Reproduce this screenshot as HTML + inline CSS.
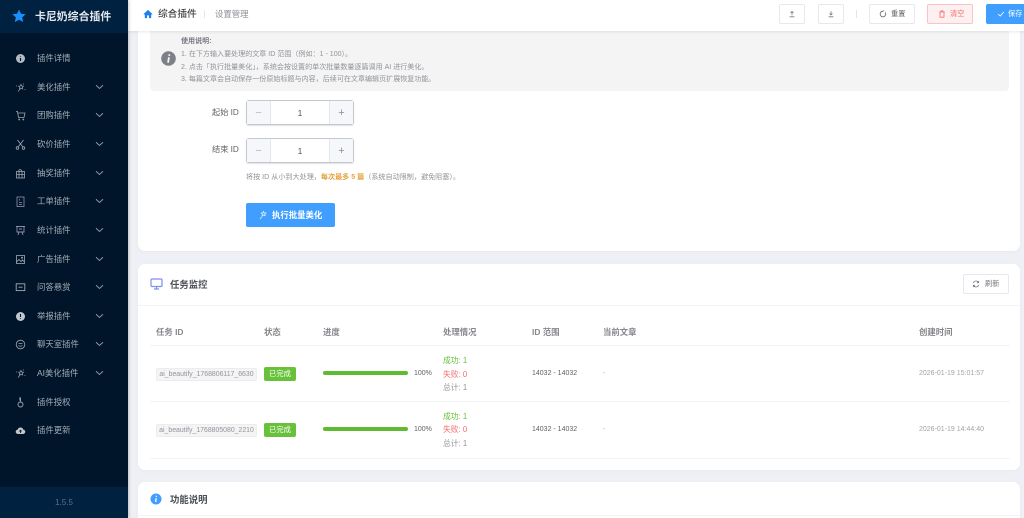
<!DOCTYPE html>
<html lang="zh">
<head>
<meta charset="utf-8">
<style>
*{box-sizing:border-box;margin:0;padding:0}
html,body{width:1024px;height:518px;overflow:hidden}
html{background:#eef0f5}
body{position:relative;background:#eef0f5;font-family:"Liberation Sans","Noto Sans CJK SC",sans-serif;color:#606266;filter:blur(.3px)}
.a{position:absolute;white-space:nowrap}
svg{position:absolute;display:block;fill:none}
#side{position:absolute;left:0;top:0;width:128px;height:518px;background:#001529;box-shadow:1px 0 3px rgba(0,0,0,.2);z-index:5}
#logo{position:absolute;left:0;top:0;width:128px;height:33px;background:#002140}
#foot{position:absolute;left:0;top:487px;width:128px;height:31px;background:#002140;color:#5f7186;font-size:8px;text-align:center;line-height:31px}
.m{position:absolute;left:37px;font-size:8.4px;line-height:12px;color:#a3adb8;white-space:nowrap}
.chev{position:absolute;left:95px;width:9px;height:6px}
.ic{left:15px;width:11px;height:11px}
#top{position:absolute;left:128px;top:0;width:896px;height:31px;background:#fff;box-shadow:0 1px 3px rgba(0,0,0,.09);z-index:4}
.btn{position:absolute;top:4px;height:20px;border:1px solid #e6e8ee;border-radius:2px;background:#fff;font-size:7.2px;line-height:18px;color:#606266}
.card{position:absolute;left:138px;width:882px;background:#fff;border-radius:7px;box-shadow:0 1px 4px rgba(0,0,0,.03)}
.num{position:absolute;left:246px;width:108px;height:25px;border:1px solid #c4c7cd;border-radius:3px;background:#fff;box-shadow:0 1px 1px rgba(0,0,0,.12);font-size:8.5px;color:#555}
.num i{position:absolute;top:0;width:24px;height:23px;background:#f5f7fa;color:#b5b8bf;font-style:normal;text-align:center;line-height:25px;font-size:11px}
.num b{position:absolute;left:24px;width:58px;top:0;text-align:center;font-weight:400;line-height:24px}
.lab{position:absolute;font-size:8.2px;color:#606266;white-space:nowrap}
.th{position:absolute;top:326px;font-size:8.4px;line-height:12px;color:#85878c;white-space:nowrap;font-weight:700}
.ln{position:absolute;left:150px;width:860px;height:1px;background:#f3f4f6}
.tid{position:absolute;left:156px;width:101px;height:13px;background:#f4f4f5;border:1px solid #ececee;border-radius:2px;font-size:6.9px;line-height:11px;color:#909399;text-align:center;white-space:nowrap;overflow:hidden}
.tag{position:absolute;left:264px;width:32px;height:14px;background:#67c23a;border-radius:2px;color:#fff;font-size:7.3px;line-height:14px;text-align:center}
.bar{position:absolute;left:323px;width:85px;height:4px;border-radius:2px;background:#5fbb32}
.s{position:absolute;font-size:7.8px;line-height:10px;white-space:nowrap}
.n{font-size:7px}
.info{font-size:7.05px;line-height:11px;color:#909399}
</style>
</head>
<body>
<div id="side">
  <div id="logo"></div>
  <svg style="left:12px;top:9px" width="14" height="14" viewBox="0 0 14 14"><path d="M7 .5l2 4.200 4.600.6-3.400 3.100 1 4.600L7 10.700l-4.200 2.300 1-4.600L.4 5.300 5 4.700z" fill="#1890ff"/></svg>
  <div class="a" style="left:35px;top:10px;font-size:10.900px;line-height:14px;color:#e4e8ec;font-weight:700">卡尼奶综合插件</div>

  <svg class="ic" style="top:53px" viewBox="0 0 11 11"><circle cx="5.500" cy="5.500" r="4.500" fill="#b4bac1"/><path d="M5.500 3v.6M5.500 5v3" stroke="#001529" stroke-width="1.200"/></svg>
  <div class="m" style="top:52px">插件详情</div>

  <svg class="ic" style="top:82px" viewBox="0 0 11 11" stroke="#8d98a4" stroke-width=".8"><path d="M3 9.500l2.500-3M6 2.500l.8 1.500 1.700.2-1.200 1.200.3 1.600-1.600-.8-1.500.8.300-1.600L3.600 4.200l1.600-.2zM1 4h1M9.500 7.500h1M8.500 1.500v1"/></svg>
  <div class="m" style="top:81px">美化插件</div>
  <svg class="chev" style="top:84px" viewBox="0 0 9 6"><path d="M1 1.200l3.500 3.300L8 1.200" stroke="#8b96a3"/></svg>

  <svg class="ic" style="top:110px" viewBox="0 0 11 11" stroke="#a0a9b3" stroke-width=".8"><path d="M1 1.500h1.500l1 6h5.500L10 3H3"/><circle cx="4.200" cy="9.500" r=".5"/><circle cx="8.300" cy="9.500" r=".5"/></svg>
  <div class="m" style="top:109px">团购插件</div>
  <svg class="chev" style="top:112px" viewBox="0 0 9 6"><path d="M1 1.200l3.500 3.300L8 1.200" stroke="#8b96a3"/></svg>

  <svg class="ic" style="top:139px" viewBox="0 0 11 11" stroke="#a0a9b3" stroke-width=".8"><path d="M2.500 1l5 6.500M8.500 1l-5 6.500"/><circle cx="2.500" cy="9" r="1.300"/><circle cx="8.500" cy="9" r="1.300"/></svg>
  <div class="m" style="top:138px">砍价插件</div>
  <svg class="chev" style="top:141px" viewBox="0 0 9 6"><path d="M1 1.200l3.500 3.300L8 1.200" stroke="#8b96a3"/></svg>

  <svg class="ic" style="top:168px" viewBox="0 0 11 11" stroke="#a0a9b3" stroke-width=".8"><rect x="1.500" y="3.500" width="8" height="6.500"/><path d="M1.500 6.500h8M4 3.500v6.500M7 3.500v6.500M4 3.500c-1-2 2-3 3 0"/></svg>
  <div class="m" style="top:167px">抽奖插件</div>
  <svg class="chev" style="top:170px" viewBox="0 0 9 6"><path d="M1 1.200l3.500 3.300L8 1.200" stroke="#8b96a3"/></svg>

  <svg class="ic" style="top:196px" viewBox="0 0 11 11" stroke="#8f8fb0" stroke-width=".8"><rect x="2" y="1" width="7" height="9.500"/><path d="M4 6.500h3M4 8.500h3M4.500 3v1.500"/></svg>
  <div class="m" style="top:195px">工单插件</div>
  <svg class="chev" style="top:198px" viewBox="0 0 9 6"><path d="M1 1.200l3.500 3.300L8 1.200" stroke="#8b96a3"/></svg>

  <svg class="ic" style="top:225px" viewBox="0 0 11 11" stroke="#8f8fb0" stroke-width=".9"><path d="M1 1.500h9M2 1.500v5.500h7V1.500M4 7l-1 3M7 7l1 3M4 4h3"/></svg>
  <div class="m" style="top:224px">统计插件</div>
  <svg class="chev" style="top:227px" viewBox="0 0 9 6"><path d="M1 1.200l3.500 3.300L8 1.200" stroke="#8b96a3"/></svg>

  <svg class="ic" style="top:254px" viewBox="0 0 11 11" stroke="#a0a9b3" stroke-width=".8"><rect x="1.500" y="1.500" width="8" height="8"/><path d="M1.500 8l2.500-2.500 2 2 1.500-1.500 2 2"/><circle cx="7" cy="3.800" r=".6"/></svg>
  <div class="m" style="top:253px">广告插件</div>
  <svg class="chev" style="top:256px" viewBox="0 0 9 6"><path d="M1 1.200l3.500 3.300L8 1.200" stroke="#8b96a3"/></svg>

  <svg class="ic" style="top:282px" viewBox="0 0 11 11" stroke="#a0a9b3" stroke-width=".9"><rect x="1.200" y="1.800" width="8.600" height="6.800"/><path d="M3.500 5.200h4"/></svg>
  <div class="m" style="top:281px">问答悬赏</div>
  <svg class="chev" style="top:284px" viewBox="0 0 9 6"><path d="M1 1.200l3.500 3.300L8 1.200" stroke="#8b96a3"/></svg>

  <svg class="ic" style="top:311px" viewBox="0 0 11 11"><circle cx="5.500" cy="5.500" r="4.500" fill="#c2c7cd"/><path d="M5.500 3v3M5.500 7.200v.8" stroke="#001529" stroke-width="1.100"/></svg>
  <div class="m" style="top:310px">举报插件</div>
  <svg class="chev" style="top:313px" viewBox="0 0 9 6"><path d="M1 1.200l3.500 3.300L8 1.200" stroke="#8b96a3"/></svg>

  <svg class="ic" style="top:339px" viewBox="0 0 11 11" stroke="#a0a9b3" stroke-width=".8"><circle cx="5.500" cy="5.500" r="4.300"/><path d="M3.500 6.500c1 1 3 1 4 0M3.500 4.500h4"/></svg>
  <div class="m" style="top:338px">聊天室插件</div>
  <svg class="chev" style="top:341px" viewBox="0 0 9 6"><path d="M1 1.200l3.500 3.300L8 1.200" stroke="#8b96a3"/></svg>

  <svg class="ic" style="top:368px" viewBox="0 0 11 11" stroke="#8d98a4" stroke-width=".8"><path d="M3 9.500l2.500-3M6 2.500l.8 1.500 1.700.2-1.200 1.200.3 1.600-1.600-.8-1.500.8.300-1.600L3.600 4.200l1.600-.2zM1 4h1M9.500 7.500h1M8.500 1.500v1"/></svg>
  <div class="m" style="top:367px">AI美化插件</div>
  <svg class="chev" style="top:370px" viewBox="0 0 9 6"><path d="M1 1.200l3.500 3.300L8 1.200" stroke="#8b96a3"/></svg>

  <svg class="ic" style="top:397px" viewBox="0 0 11 11" stroke="#a0a9b3" stroke-width=".9"><circle cx="5.500" cy="7.500" r="2.500"/><path d="M5.500 5V1H4M5.500 2.800H4"/></svg>
  <div class="m" style="top:396px">插件授权</div>

  <svg class="ic" style="top:425px" viewBox="0 0 11 11"><path d="M3 9C1.500 9 .7 8 .7 6.800S1.700 4.800 2.600 4.800C3 3.300 4.100 2.500 5.500 2.500S8 3.400 8.400 4.800c1.100 0 1.900.9 1.900 2S9.500 9 8 9z" fill="#c2c7cd"/><path d="M5.500 8V5.200M4.300 6.400l1.200-1.200 1.200 1.200" stroke="#001529" stroke-width=".8"/></svg>
  <div class="m" style="top:424px">插件更新</div>

  <div id="foot">1.5.5</div>
</div>

<div id="top">
  <svg style="left:15px;top:9px" width="10" height="10" viewBox="0 0 11 11"><path d="M5.500 1L.8 5.300v.7H2v4h2.500V7h2v3H9V6h1.200v-.7z" fill="#1e7ff0"/></svg>
  <div class="a" style="left:30px;top:8px;font-size:9.700px;line-height:14px;color:#3f4246;font-weight:500">综合插件</div>
  <div class="a" style="left:76px;top:10px;width:1px;height:8px;background:#e3e5e9"></div>
  <div class="a" style="left:87px;top:8px;font-size:8.400px;line-height:12px;color:#8c8f95">设置管理</div>

  <div class="btn" style="left:651px;width:26px">
    <svg style="left:8px;top:5px" width="8" height="8" viewBox="0 0 10 10" stroke="#777" stroke-width="1"><path d="M2 8.500h6M5 6.500V2M3.200 3.600L5 1.800l1.800 1.800"/></svg>
  </div>
  <div class="btn" style="left:690px;width:26px">
    <svg style="left:8px;top:5px" width="8" height="8" viewBox="0 0 10 10" stroke="#777" stroke-width="1"><path d="M2 8.500h6M5 1.500V6M3.200 4.400L5 6.200l1.800-1.800"/></svg>
  </div>
  <div class="a" style="left:728px;top:10px;width:1px;height:8px;background:#e3e5e9"></div>
  <div class="btn" style="left:741px;width:46px">
    <svg style="left:9px;top:5px" width="8" height="8" viewBox="0 0 10 10" stroke="#666" stroke-width="1"><path d="M7.800 3A3.500 3.500 0 1 1 5 1.500M5 1.500l1.500-.8"/></svg>
    <span class="a" style="left:21px;top:0">重置</span>
  </div>
  <div class="btn" style="left:799px;width:46px;background:#fef0f0;border-color:#fbc4c4;color:#f56c6c">
    <svg style="left:10px;top:5px" width="8" height="8" viewBox="0 0 10 10" stroke="#f56c6c" stroke-width="1"><path d="M1.500 2.500h7M2.500 2.500v6.500h5V2.500M3.800 2.500V1h2.400v1.500"/></svg>
    <span class="a" style="left:22px;top:0">清空</span>
  </div>
  <div class="btn" style="left:858px;width:46px;background:#409eff;border-color:#409eff;color:#fff">
    <svg style="left:10px;top:5px" width="8" height="8" viewBox="0 0 10 10" stroke="#fff" stroke-width="1"><path d="M1.500 5.200l2.500 2.300 4.500-5"/></svg>
    <span class="a" style="left:21px;top:0">保存</span>
  </div>
</div>

<!-- top card -->
<div class="card" style="top:0;height:251px"></div>
<div class="a" style="left:150px;top:20px;width:859px;height:71px;background:#f4f4f5;border-radius:4px"></div>
<svg style="left:161px;top:51px" width="15" height="15" viewBox="0 0 15 15"><circle cx="7.500" cy="7.500" r="7.300" fill="#7d8187"/><path d="M8.300 3.300v1.600M8 6.300l-1 5.400" stroke="#f4f4f5" stroke-width="1.800"/></svg>
<div class="a info" style="left:181px;top:36px;color:#7a7d83;font-weight:700">使用说明:</div>
<div class="a info" style="left:181px;top:49px">1. 在下方输入要处理的文章 ID 范围（例如：1 - 100）。</div>
<div class="a info" style="left:181px;top:62px">2. 点击「执行批量美化」，系统会按设置的单次批量数量逐篇调用 AI 进行美化。</div>
<div class="a info" style="left:181px;top:74px">3. 每篇文章会自动保存一份原始标题与内容，后续可在文章编辑页扩展恢复功能。</div>

<div class="lab" style="left:212px;top:107px;line-height:12px">起始 ID</div>
<div class="num" style="top:100px"><i style="left:0;border-right:1px solid #e4e7ed">−</i><b>1</b><i style="right:0;border-left:1px solid #e4e7ed;color:#8d9097">+</i></div>
<div class="lab" style="left:212px;top:144px;line-height:12px">结束 ID</div>
<div class="num" style="top:138px"><i style="left:0;border-right:1px solid #e4e7ed">−</i><b>1</b><i style="right:0;border-left:1px solid #e4e7ed;color:#8d9097">+</i></div>
<div class="a info" style="left:246px;top:172px;font-size:7.100px">将按 ID 从小到大处理，<span style="color:#e6a23c;font-weight:700">每次最多 5 篇</span>（系统自动限制，避免阻塞）。</div>
<div class="a" style="left:246px;top:203px;width:89px;height:24px;background:#409eff;border-radius:2px"></div>
<svg style="left:258px;top:210px" width="10" height="10" viewBox="0 0 10 10" stroke="#e6f2ff" stroke-width=".8"><path d="M2 9l2.300-2.700M5.500 1.500l.8 1.400 1.600.2-1.100 1.100.3 1.500-1.500-.7-1.400.7.200-1.500L3.300 3.100l1.500-.2z"/></svg>
<div class="a" style="left:272px;top:209px;font-size:8.400px;line-height:12px;color:#fff;font-weight:700">执行批量美化</div>

<!-- monitor card -->
<div class="card" style="top:264px;height:206px"></div>
<svg style="left:150px;top:278px" width="13" height="12" viewBox="0 0 13 12" stroke="#7b8ff0" stroke-width="1.200"><rect x="1" y="1" width="11" height="7.500" rx="1"/><path d="M6.500 8.500v2M4 11h5"/></svg>
<div class="a" style="left:170px;top:278px;font-size:9.400px;line-height:14px;color:#4b4e53;font-weight:700">任务监控</div>
<div class="a" style="left:963px;top:274px;width:46px;height:20px;background:#fff;border:1px solid #e6e8ee;border-radius:2px"></div>
<svg style="left:972px;top:280px" width="8" height="8" viewBox="0 0 9 9" stroke="#7a7d83" stroke-width=".9"><path d="M7.500 3A3.200 3.200 0 0 0 1.500 3.500M1.500 6a3.200 3.200 0 0 0 6-.5M7.500 1v2h-2M1.500 8V6h2"/></svg>
<div class="a" style="left:985px;top:278px;font-size:7.200px;line-height:12px;color:#73767b">刷新</div>
<div class="ln" style="top:305px;left:138px;width:882px"></div>

<div class="th" style="left:156px">任务 ID</div>
<div class="th" style="left:264px">状态</div>
<div class="th" style="left:323px">进度</div>
<div class="th" style="left:443px">处理情况</div>
<div class="th" style="left:532px">ID 范围</div>
<div class="th" style="left:603px">当前文章</div>
<div class="th" style="left:919px">创建时间</div>
<div class="ln" style="top:345px"></div>

<div class="tid" style="top:368px">ai_beautify_1768806117_6630</div>
<div class="tag" style="top:367px">已完成</div>
<div class="bar" style="top:371px"></div>
<div class="s n" style="left:414px;top:369px;color:#606266">100%</div>
<div class="s" style="left:443px;top:356px;color:#67c23a">成功: 1</div>
<div class="s" style="left:443px;top:370px;color:#f56c6c">失败: 0</div>
<div class="s" style="left:443px;top:383px;color:#909399">总计: 1</div>
<div class="s n" style="left:532px;top:369px;color:#606266">14032 - 14032</div>
<div class="s n" style="left:603px;top:369px;color:#a8abb2">-</div>
<div class="s n" style="left:919px;top:369px;color:#a0a3a9">2026-01-19 15:01:57</div>
<div class="ln" style="top:401px"></div>

<div class="tid" style="top:424px">ai_beautify_1768805080_2210</div>
<div class="tag" style="top:423px">已完成</div>
<div class="bar" style="top:427px"></div>
<div class="s n" style="left:414px;top:425px;color:#606266">100%</div>
<div class="s" style="left:443px;top:412px;color:#67c23a">成功: 1</div>
<div class="s" style="left:443px;top:425px;color:#f56c6c">失败: 0</div>
<div class="s" style="left:443px;top:439px;color:#909399">总计: 1</div>
<div class="s n" style="left:532px;top:425px;color:#606266">14032 - 14032</div>
<div class="s n" style="left:603px;top:425px;color:#a8abb2">-</div>
<div class="s n" style="left:919px;top:425px;color:#a0a3a9">2026-01-19 14:44:40</div>
<div class="ln" style="top:458px"></div>

<!-- feature card -->
<div class="card" style="top:482px;height:60px"></div>
<svg style="left:150px;top:493px" width="12" height="12" viewBox="0 0 12 12"><circle cx="6" cy="6" r="5.500" fill="#409eff"/><path d="M6.400 2.800v1.100M6.200 5.200l-.6 3.800" stroke="#fff" stroke-width="1.300"/></svg>
<div class="a" style="left:170px;top:493px;font-size:9.400px;line-height:14px;color:#4b4e53;font-weight:700">功能说明</div>
<div class="ln" style="top:515px;left:138px;width:882px"></div>
</body>
</html>
